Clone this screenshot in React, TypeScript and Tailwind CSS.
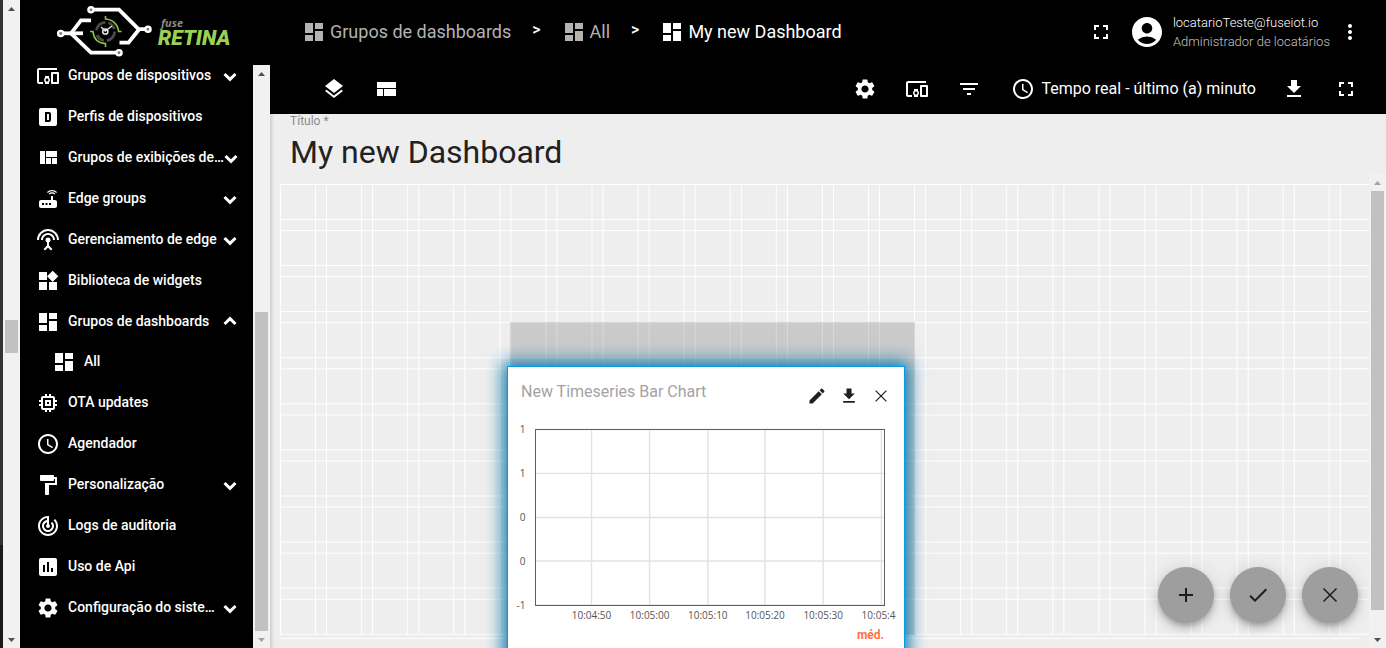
import type { ReactNode } from "react";
import {
  MdAccessTime,
  MdAccountCircle,
  MdCheck,
  MdAdd,
  MdDashboard,
  MdDevicesOther,
  MdEdit,
  MdFilterList,
  MdFormatPaint,
  MdFullscreen,
  MdInsertChart,
  MdLayers,
  MdMemory,
  MdMoreVert,
  MdRouter,
  MdSettings,
  MdSettingsInputAntenna,
  MdTrackChanges,
  MdWidgets,
} from "react-icons/md";

function PathIcon({ d, size = 24 }: { d: string; size?: number }) {
  return (
    <svg width={size} height={size} viewBox="0 0 24 24" fill="currentColor" fillRule="evenodd" aria-hidden="true">
      <path d={d} />
    </svg>
  );
}

const ALPHA_D_BOX =
  "M9,7H13A2,2 0 0,1 15,9V15A2,2 0 0,1 13,17H9V7M11,9V15H13V9H11M5,3H19A2,2 0 0,1 21,5V19A2,2 0 0,1 19,21H5A2,2 0 0,1 3,19V5A2,2 0 0,1 5,3Z";
const VIEW_QUILT = "M10 18h5v-6h-5v6zm-6 0h5V5H4v13zm12 0h5v-6h-5v6zM10 5v6h11V5H10z";
const VIEW_COMPACT = "M3 19h6v-7H3v7zm7 0h12v-7H10v7zM3 5v6h19V5H3z";
const DOWNLOAD = "M19 9h-4V3H9v6H5l7 7 7-7zM5 18v2h14v-2H5z";

function CloseIcon({ size }: { size: number }) {
  return (
    <svg width={size} height={size} viewBox="0 0 24 24" fill="none" stroke="currentColor" strokeWidth="1.5" aria-hidden="true">
      <path d="M5.5 5.5 L18.5 18.5 M18.5 5.5 L5.5 18.5" />
    </svg>
  );
}

type Toggle = "down" | "up" | null;

interface NavItem {
  label: string;
  icon: ReactNode;
  toggle: Toggle;
  child?: boolean;
}

const NAV: NavItem[] = [
  { label: "Grupos de dispositivos", icon: <MdDevicesOther size={24} />, toggle: "down" },
  { label: "Perfis de dispositivos", icon: <PathIcon d={ALPHA_D_BOX} />, toggle: null },
  { label: "Grupos de exibições de…", icon: <PathIcon d={VIEW_QUILT} />, toggle: "down" },
  { label: "Edge groups", icon: <MdRouter size={24} />, toggle: "down" },
  { label: "Gerenciamento de edge", icon: <MdSettingsInputAntenna size={24} />, toggle: "down" },
  { label: "Biblioteca de widgets", icon: <MdWidgets size={24} />, toggle: null },
  { label: "Grupos de dashboards", icon: <MdDashboard size={24} />, toggle: "up" },
  { label: "All", icon: <MdDashboard size={24} />, toggle: null, child: true },
  { label: "OTA updates", icon: <MdMemory size={24} />, toggle: null },
  { label: "Agendador", icon: <MdAccessTime size={24} />, toggle: null },
  { label: "Personalização", icon: <MdFormatPaint size={24} />, toggle: "down" },
  { label: "Logs de auditoria", icon: <MdTrackChanges size={24} />, toggle: null },
  { label: "Uso de Api", icon: <MdInsertChart size={24} />, toggle: null },
  { label: "Configuração do siste…", icon: <MdSettings size={24} />, toggle: "down" },
];

function Chevron({ up }: { up: boolean }) {
  return (
    <svg
      width="14"
      height="10"
      viewBox="0 0 14 10"
      fill="none"
      stroke="#fff"
      strokeWidth="3"
      className={`shrink-0 ${up ? "" : "mt-1"}`}
      aria-hidden="true"
    >
      <path d={up ? "M1.5 8 L7 2.6 L12.5 8" : "M1.5 2 L7 7.4 L12.5 2"} />
    </svg>
  );
}

function Arrow({ up, color }: { up?: boolean; color: string }) {
  return (
    <svg width="17" height="17" viewBox="0 0 17 17" fill={color} className="shrink-0" aria-hidden="true">
      <path d={up ? "M5 11 L8.5 7 L12 11 Z" : "M5 7 L8.5 11 L12 7 Z"} />
    </svg>
  );
}

function Scrollbar({ thumb, top, bottom }: { thumb: string; top: string; bottom: string }) {
  return (
    <div className="flex w-[17px] shrink-0 flex-col bg-[#f1f1f1]" aria-hidden="true">
      <Arrow up color={top} />
      <div className="flex min-h-0 flex-1 flex-col px-0.5">
        <div className={`bg-[#c1c1c1] ${thumb}`} />
      </div>
      <Arrow color={bottom} />
    </div>
  );
}

function Logo() {
  return (
    <svg width="180" height="56" viewBox="54 3 180 56" role="img" aria-label="fuse RETINA">
      <g fill="none" stroke="#fff" strokeWidth="3.8" strokeLinejoin="miter">
        <path d="M93 9.7 H119 L138.5 29.2 H145" />
        <path d="M139 29.5 L128.5 42.7 H119.5" />
        <path d="M63 33.3 H83" />
        <path d="M71 33.3 L81 20.3 H91" />
        <path d="M71 33.3 L91 52.7 H116" />
      </g>
      <g fill="#777" stroke="#fff" strokeWidth="2.4">
        <circle cx="91" cy="9.8" r="2.6" />
        <circle cx="148" cy="29.3" r="2.6" />
        <circle cx="60.7" cy="33.5" r="2.6" />
        <circle cx="119" cy="52.7" r="2.6" />
      </g>
      <g fill="none">
        <path d="M105.5 16 V19 C113 19.5 118 24.5 118.6 31.5 H121.5" stroke="#8cc63f" strokeWidth="1.6" />
        <path d="M90 31.5 H93 C93.5 38.5 98 43 105.5 43.6 V47" stroke="#8cc63f" strokeWidth="1.6" />
        <circle cx="105.5" cy="31.5" r="9.2" stroke="#4a4a4a" strokeWidth="2.8" strokeDasharray="13 3 9 5" />
        <path d="M101 27 L105.3 31 L112 26" stroke="#ddd" strokeWidth="1.5" />
        <circle cx="105.3" cy="31.5" r="2.6" stroke="#eee" strokeWidth="1.5" />
      </g>
      <text x="161" y="26.5" fontFamily="Open Sans, sans-serif" fontSize="11" fontWeight="700" fontStyle="italic" fill="#8a8a8a">
        fuse
      </text>
      <text x="158" y="44.5" fontFamily="Roboto, sans-serif" fontSize="21" fontWeight="900" fontStyle="italic" fill="#9bd153">
        RETINA
      </text>
    </svg>
  );
}

function Sidebar() {
  return (
    <aside className="flex w-[250px] shrink-0 flex-col bg-black">
      <div className="flex h-[65px] shrink-0 items-start pt-[3px] pl-[34px]">
        <Logo />
      </div>
      <div className="flex min-h-0 flex-1">
        <nav className="min-w-0 flex-1 overflow-hidden">
          <ul className="-mt-[11px]">
            {NAV.map((item) => (
              <li key={item.label}>
                <a
                  href="#"
                  className={`flex items-center pr-4 text-sm font-medium text-white ${item.child ? "h-10 pl-8" : "h-[41px] pl-4"}`}
                >
                  <span className="mt-0.5 mr-2 shrink-0">{item.icon}</span>
                  <span className="flex-1 whitespace-nowrap">{item.label}</span>
                  {item.toggle && <Chevron up={item.toggle === "up"} />}
                </a>
              </li>
            ))}
          </ul>
        </nav>
        <Scrollbar thumb="mt-[230px] flex-1" top="#505050" bottom="#a3a3a3" />
      </div>
    </aside>
  );
}

function IconButton({ label, children, className = "" }: { label: string; children: ReactNode; className?: string }) {
  return (
    <button type="button" aria-label={label} className={`flex items-center justify-center ${className}`}>
      {children}
    </button>
  );
}

function Header() {
  return (
    <header className="flex h-[65px] shrink-0 items-center bg-black pr-6 pb-px pl-8 text-white">
      <nav className="flex flex-1 items-center text-lg font-normal whitespace-nowrap">
        <a href="#" className="flex items-center gap-1 text-[#b3b3b3]">
          <MdDashboard size={24} />
          Grupos de dashboards
        </a>
        <span className="mx-[21px] pb-1 text-base font-medium">&gt;</span>
        <a href="#" className="flex items-center gap-1 text-[#b3b3b3]">
          <MdDashboard size={24} />
          All
        </a>
        <span className="mx-[21px] pb-1 text-base font-medium">&gt;</span>
        <a href="#" className="flex items-center gap-1">
          <MdDashboard size={24} />
          My new Dashboard
        </a>
      </nav>
      <div className="flex items-center">
        <IconButton label="Tela cheia" className="mr-4">
          <MdFullscreen size={24} />
        </IconButton>
        <MdAccountCircle size={36} />
        <div className="ml-2 flex flex-col text-[13px] leading-[19px] font-light whitespace-nowrap">
          <span>locatarioTeste@fuseiot.io</span>
          <span className="text-[#c4c4c4]">Administrador de locatários</span>
        </div>
        <IconButton label="Mais opções" className="ml-2">
          <MdMoreVert size={24} />
        </IconButton>
      </div>
    </header>
  );
}

function Toolbar() {
  return (
    <div className="flex h-[49px] shrink-0 items-center justify-between bg-black pr-7 pb-px pl-[52px] text-white">
      <div className="flex items-center gap-7">
        <IconButton label="Camadas">
          <MdLayers size={24} />
        </IconButton>
        <IconButton label="Layout">
          <PathIcon d={VIEW_COMPACT} />
        </IconButton>
      </div>
      <div className="flex items-center">
        <div className="mr-[30px] flex items-center gap-7">
          <IconButton label="Configurações">
            <MdSettings size={24} />
          </IconButton>
          <IconButton label="Aliases de entidade">
            <MdDevicesOther size={24} />
          </IconButton>
          <IconButton label="Filtros">
            <MdFilterList size={24} />
          </IconButton>
        </div>
        <button type="button" className="flex items-center gap-1.5 text-base font-normal whitespace-nowrap">
          <MdAccessTime size={24} />
          Tempo real - último (a) minuto
        </button>
        <div className="ml-[26px] flex items-center gap-7">
          <IconButton label="Exportar dashboard">
            <PathIcon d={DOWNLOAD} />
          </IconButton>
          <IconButton label="Tela cheia">
            <MdFullscreen size={24} />
          </IconButton>
        </div>
      </div>
    </div>
  );
}

const CELL = 46.08;

function GridLines() {
  const columns = Array.from({ length: 24 }, (_, i) => i * CELL);
  const rows = Array.from({ length: 10 }, (_, i) => i * CELL);
  return (
    <svg width="100%" height="455" className="absolute inset-0" stroke="#fff" strokeWidth="1" aria-hidden="true">
      {columns.map((x) => (
        <g key={x}>
          <line x1={x + 0.5} x2={x + 0.5} y1="0" y2="451" />
          <line x1={x + 35.5} x2={x + 35.5} y1="0" y2="451" />
        </g>
      ))}
      {rows.map((y) => (
        <g key={y}>
          <line x1="0" x2="100%" y1={y + 0.5} y2={y + 0.5} />
          <line x1="0" x2="100%" y1={y + 35.5} y2={y + 35.5} />
        </g>
      ))}
      <line x1="0" x2="1079" y1="454.5" y2="454.5" />
    </svg>
  );
}

const X_TICKS = [
  { x: 84.5, label: "10:04:50" },
  { x: 142.6, label: "10:05:00" },
  { x: 200.8, label: "10:05:10" },
  { x: 258, label: "10:05:20" },
  { x: 316.2, label: "10:05:30" },
  { x: 374.4, label: "10:05:40" },
];
const Y_TICKS = [
  { y: 8.5, label: "1" },
  { y: 52.4, label: "1" },
  { y: 96.5, label: "0" },
  { y: 140, label: "0" },
  { y: 184, label: "-1" },
];

function Chart() {
  return (
    <svg width="388" height="204" viewBox="0 0 388 204" className="block" role="img" aria-label="New Timeseries Bar Chart">
      <g stroke="#e2e2e2" strokeWidth="1.4">
        {X_TICKS.map((t) => (
          <line key={t.x} x1={t.x - 1} x2={t.x - 1} y1="9" y2="184" />
        ))}
        {Y_TICKS.map((t) => (
          <line key={t.y} x1="28" x2="377" y1={t.y} y2={t.y} />
        ))}
      </g>
      <rect x="27.5" y="8.5" width="349" height="176" fill="none" stroke="#606060" />
      <g fontFamily="Open Sans, sans-serif" fontSize="10" fill="#545454">
        {Y_TICKS.map((t) => (
          <text key={t.y} x="17.5" y={t.y + 3.5} textAnchor="end">
            {t.label}
          </text>
        ))}
        {X_TICKS.map((t) => (
          <text key={t.x} x={t.x - 1} y="198" textAnchor="middle">
            {t.label}
          </text>
        ))}
      </g>
    </svg>
  );
}

function Widget() {
  return (
    <section className="absolute top-[182px] left-[227px] w-[398px] border border-[#039be5] bg-white pb-6 shadow-[0_0_16px_4px_#0a78ab]">
      <div className="flex items-start justify-between px-[13px] pt-[15px]">
        <h2 className="text-base leading-5 font-normal text-[#a3a3a3]">New Timeseries Bar Chart</h2>
        <div className="mt-1 flex gap-3 text-[#212121]">
          <IconButton label="Editar" className="size-5">
            <MdEdit size={20} />
          </IconButton>
          <IconButton label="Exportar" className="size-5">
            <PathIcon d={DOWNLOAD} size={20} />
          </IconButton>
          <IconButton label="Remover" className="size-5">
            <CloseIcon size={20} />
          </IconButton>
        </div>
      </div>
      <div className="mt-[15px]">
        <Chart />
      </div>
      <p className="pt-0.5 pr-5 text-right text-xs leading-4 font-bold text-[#ff7043]">méd.</p>
    </section>
  );
}

function Fab({ label, children }: { label: string; children: ReactNode }) {
  return (
    <button
      type="button"
      aria-label={label}
      className="flex size-14 items-center justify-center rounded-full bg-[#9e9e9e] text-[#1c1c1c] shadow-[0_3px_5px_-1px_rgba(0,0,0,0.2),0_6px_10px_rgba(0,0,0,0.14),0_1px_18px_rgba(0,0,0,0.12)]"
    >
      {children}
    </button>
  );
}

function Dashboard() {
  return (
    <main className="relative flex min-h-0 flex-1 flex-col bg-[#eee] shadow-[inset_4px_0_4px_-3px_rgba(0,0,0,0.2)]">
      <div className="flex h-[60px] shrink-0 flex-col pl-5">
        <label htmlFor="dashboard-title" className="text-xs leading-[14px] text-[#8c8c8c]">
          Título *
        </label>
        <input
          id="dashboard-title"
          defaultValue="My new Dashboard"
          className="h-12 w-full bg-transparent text-[32px] font-normal text-[#212121] outline-none"
        />
      </div>
      <div className="flex min-h-0 flex-1">
        <div className="min-w-0 flex-1 overflow-hidden pt-2.5 pl-2.5">
          <div className="relative h-full">
            <GridLines />
            <div className="absolute top-[138px] left-[230px] h-[313px] w-[405px] bg-black/15" />
            <Widget />
          </div>
        </div>
        <Scrollbar thumb="h-[419px]" top="#a3a3a3" bottom="#505050" />
      </div>
      <div className="absolute right-7 bottom-[25px] flex gap-4">
        <Fab label="Adicionar">
          <MdAdd size={24} />
        </Fab>
        <Fab label="Aplicar">
          <MdCheck size={24} />
        </Fab>
        <Fab label="Cancelar">
          <CloseIcon size={24} />
        </Fab>
      </div>
    </main>
  );
}

export default function App() {
  return (
    <div className="flex h-screen overflow-hidden bg-black font-[Roboto,sans-serif]">
      <div className="flex w-[3px] shrink-0 flex-col bg-[#1b1b1b]">
        <div className="h-[545px] bg-[#333]" />
      </div>
      <Scrollbar thumb="mt-[303px] h-[33px]" top="#505050" bottom="#505050" />
      <Sidebar />
      <div className="flex min-w-0 flex-1 flex-col">
        <Header />
        <Toolbar />
        <Dashboard />
      </div>
    </div>
  );
}
